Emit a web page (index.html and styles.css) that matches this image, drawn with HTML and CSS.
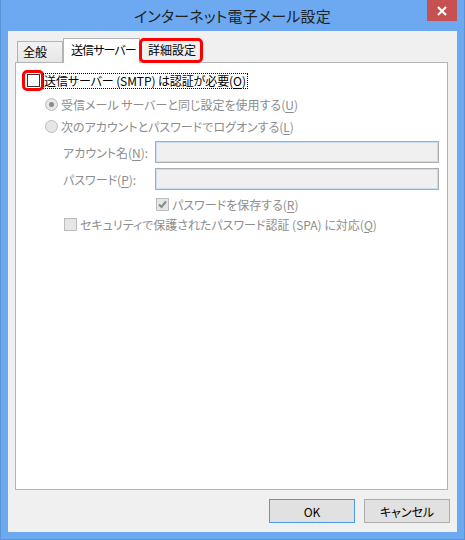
FILE: index.html
```html
<!DOCTYPE html>
<html lang="ja">
<head>
<meta charset="utf-8">
<title>インターネット電子メール設定</title>
<link rel="stylesheet" href="styles.css">
</head>
<body>
<div class="window">
  <div class="titlebar">
    <span class="spacer"></span>
    <div class="title">インターネット電子メール設定</div>
    <div class="close">
      <svg width="10" height="10" viewBox="0 0 10 10"><path d="M1 1 L9 9 M9 1 L1 9" stroke="#fff" stroke-width="2.2" fill="none"/></svg>
    </div>
  </div>
  <div class="client">
    <div class="tabs">
      <div class="tab">全般</div>
      <div class="tab active">送信サーバー</div>
      <div class="tab marked">詳細設定</div>
    </div>
    <div class="panel">
      <div class="row row-main">
        <span class="mark"><span class="cb"></span></span>
        <span class="focus">送信サーバー (SMTP) は認証が必要(<u>O</u>)</span>
      </div>
      <div class="row row-radio first">
        <span class="radio on"></span>
        <span class="dis">受信メール サーバーと同じ設定を使用する(<u>U</u>)</span>
      </div>
      <div class="row row-radio">
        <span class="radio"></span>
        <span class="dis">次のアカウントとパスワードでログオンする(<u>L</u>)</span>
      </div>
      <div class="row row-field first">
        <span class="dis label">アカウント名(<u>N</u>):</span>
        <span class="input"></span>
      </div>
      <div class="row row-field second">
        <span class="dis label">パスワード(<u>P</u>):</span>
        <span class="input"></span>
      </div>
      <div class="row row-save">
        <span class="cb dis-cb checked">
          <svg width="11" height="11" viewBox="0 0 11 11"><path d="M2 5.5 L4.5 8 L9 2.5" stroke="#8a8a8a" stroke-width="2" fill="none"/></svg>
        </span>
        <span class="dis">パスワードを保存する(<u>R</u>)</span>
      </div>
      <div class="row row-spa">
        <span class="cb dis-cb"></span>
        <span class="dis">セキュリティで保護されたパスワード認証 (SPA) に対応(<u>Q</u>)</span>
      </div>
    </div>
    <div class="footer">
      <div class="btn default">OK</div>
      <div class="btn">キャンセル</div>
    </div>
  </div>
</div>
</body>
</html>
```
FILE: styles.css
```css
html, body {
  margin: 0;
  padding: 0;
}
body {
  font-family: "Noto Sans CJK JP", "Noto Sans", sans-serif;
  font-size: 12px;
  color: #000;
  font-feature-settings: "palt";
}
.window {
  width: 465px;
  height: 540px;
  box-sizing: border-box;
  background: #6ca9f0;
  border: 1px solid #5a92d6;
  border-top: none;
  display: flex;
  flex-direction: column;
}
.titlebar {
  height: 31px;
  display: grid;
  grid-template-columns: 1fr auto 1fr;
  margin: 0 -1px;
}
.title {
  font-size: 15px;
  color: #222;
  line-height: 31px;
  letter-spacing: 0.2px;
}
.close {
  justify-self: end;
  align-self: start;
  width: 30px;
  height: 21px;
  margin-right: 8px;
  background: #c75050;
  display: flex;
  align-items: center;
  justify-content: center;
}
.client {
  margin-left: 7px;
  width: 449px;
  height: 501px;
  background: #f0f0f0;
  display: flex;
  flex-direction: column;
}
.tabs {
  display: flex;
  align-items: flex-end;
  margin-top: 7px;
  padding-left: 9px;
  height: 24px;
}
.tab {
  box-sizing: border-box;
  flex-shrink: 0;
  white-space: nowrap;
  overflow: hidden;
  height: 21px;
  border: 1px solid #b4b4b4;
  border-bottom: none;
  background: linear-gradient(#f2f2f2, #e6e6e6);
  line-height: 19px;
  padding-left: 5px;
  width: 46px;
}
.tab.active {
  width: 77px;
  height: 25px;
  margin-bottom: -1px;
  background: #fff;
  padding-left: 7px;
  line-height: 22px;
  letter-spacing: -0.9px;
  position: relative;
  z-index: 1;
}
.tab.marked {
  width: 64px;
  height: 25px;
  margin-left: -1px;
  margin-bottom: -1px;
  border: 3px solid #ff0000;
  border-radius: 5px;
  background: #f0f0f0;
  padding-left: 6px;
  line-height: 18px;
  position: relative;
  z-index: 2;
}
.panel {
  margin-left: 7px;
  width: 433px;
  height: 428px;
  box-sizing: border-box;
  border: 1px solid #b4b4b4;
  background: #fff;
  display: flex;
  flex-direction: column;
}
.row {
  display: flex;
  align-items: center;
  white-space: nowrap;
}
.row-main {
  margin-top: 7px;
  margin-left: 6px;
  height: 21px;
}
.mark {
  box-sizing: border-box;
  width: 22px;
  height: 21px;
  border: 3px solid #ff0000;
  border-radius: 5px;
  display: flex;
  align-items: center;
  justify-content: center;
}
.cb {
  box-sizing: border-box;
  width: 13px;
  height: 13px;
  border: 1px solid #333;
  background: #fff;
  display: flex;
  align-items: center;
  justify-content: center;
}
.focus {
  border: 1px dotted #000;
  line-height: 14px;
  padding-right: 1px;
  margin-left: -1px;
  letter-spacing: -0.1px;
}
.dis {
  color: #8d8d8d;
}
.row-radio {
  height: 22px;
  margin-left: 29px;
}
.row-radio.first {
  margin-top: 2px;
}
.radio {
  box-sizing: border-box;
  width: 13px;
  height: 13px;
  border-radius: 50%;
  border: 1px solid #bcbcbc;
  background: #e6e6e6;
  margin-right: 3px;
  display: flex;
  align-items: center;
  justify-content: center;
}
.radio.on::after {
  content: "";
  width: 5px;
  height: 5px;
  border-radius: 50%;
  background: #8a8a8a;
}
.row-field {
  margin-left: 47px;
  height: 22px;
}
.row-field.first {
  margin-top: 4px;
}
.row-field.second {
  margin-top: 5px;
}
.label {
  width: 92px;
}
.input {
  box-sizing: border-box;
  width: 284px;
  height: 22px;
  border: 1px solid #abadb3;
  box-shadow: inset 0 0 0 1px #c9dcf2;
  background: #f0f0f0;
}
.row-save {
  margin-top: 4px;
  height: 20px;
  margin-left: 140px;
}
.dis-cb {
  border-color: #bcbcbc;
  background: #e6e6e6;
  margin-right: 3px;
}
.row-spa {
  height: 20px;
  margin-left: 48px;
}
.footer {
  display: flex;
  justify-content: flex-end;
  gap: 9px;
  padding-right: 7px;
  margin-top: 9px;
}
.btn {
  box-sizing: border-box;
  width: 86px;
  height: 24px;
  border: 1px solid #adadad;
  background: #e1e1e1;
  display: flex;
  align-items: center;
  justify-content: center;
}
.btn.default {
  border-color: #4c9be8;
}
u {
  text-underline-offset: 2px;
}
```
